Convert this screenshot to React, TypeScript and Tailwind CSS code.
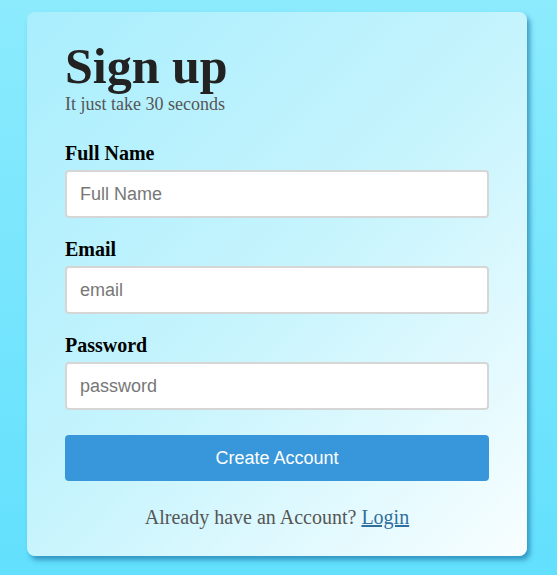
export default function App() {
  return (
    <div className="min-h-[575px] w-full bg-[linear-gradient(180deg,#8cebfd_0%,#62e0fd_100%)] pt-3 font-['Liberation_Serif',serif]">
      <div className="ml-[27px] w-[500px] rounded-lg bg-[linear-gradient(135deg,#a9eefd_0%,#c6f4fd_50%,#f8feff_100%)] px-[38px] pb-[29px] pt-[29px] shadow-[3px_4px_5px_rgba(30,120,170,0.7)]">
        <h1 className="text-[50px] font-bold leading-none text-[#222]">Sign up</h1>
        <p className="mt-[4px] text-[18px] leading-none text-[#555]">It just take 30 seconds</p>

        <form className="mt-[30px] flex flex-col gap-[21px]">
          {[
            ['Full Name', 'Full Name', 'text'],
            ['Email', 'email', 'email'],
            ['Password', 'password', 'password'],
          ].map(([label, ph, type]) => (
            <div key={label} className="flex flex-col gap-[7px]">
              <label className="text-[20px] font-bold leading-[20px] text-black">{label}</label>
              <input
                type={type}
                placeholder={ph}
                className="h-12 w-full rounded border-2 border-[#d6d6d6] bg-white px-[13px] font-['Liberation_Sans',sans-serif] text-[18px] text-[#333] outline-none placeholder:text-[#777]"
              />
            </div>
          ))}
        </form>

        <button className="mt-[25px] h-[46px] w-full rounded bg-[#3897db] font-['Liberation_Sans',sans-serif] text-[18px] text-white">
          Create Account
        </button>

        <p className="mt-[26px] text-center text-[20px] leading-[20px] text-[#555]">
          Already have an Account? <a href="#" className="text-[#2f6f9d] underline">Login</a>
        </p>
      </div>
    </div>
  );
}
